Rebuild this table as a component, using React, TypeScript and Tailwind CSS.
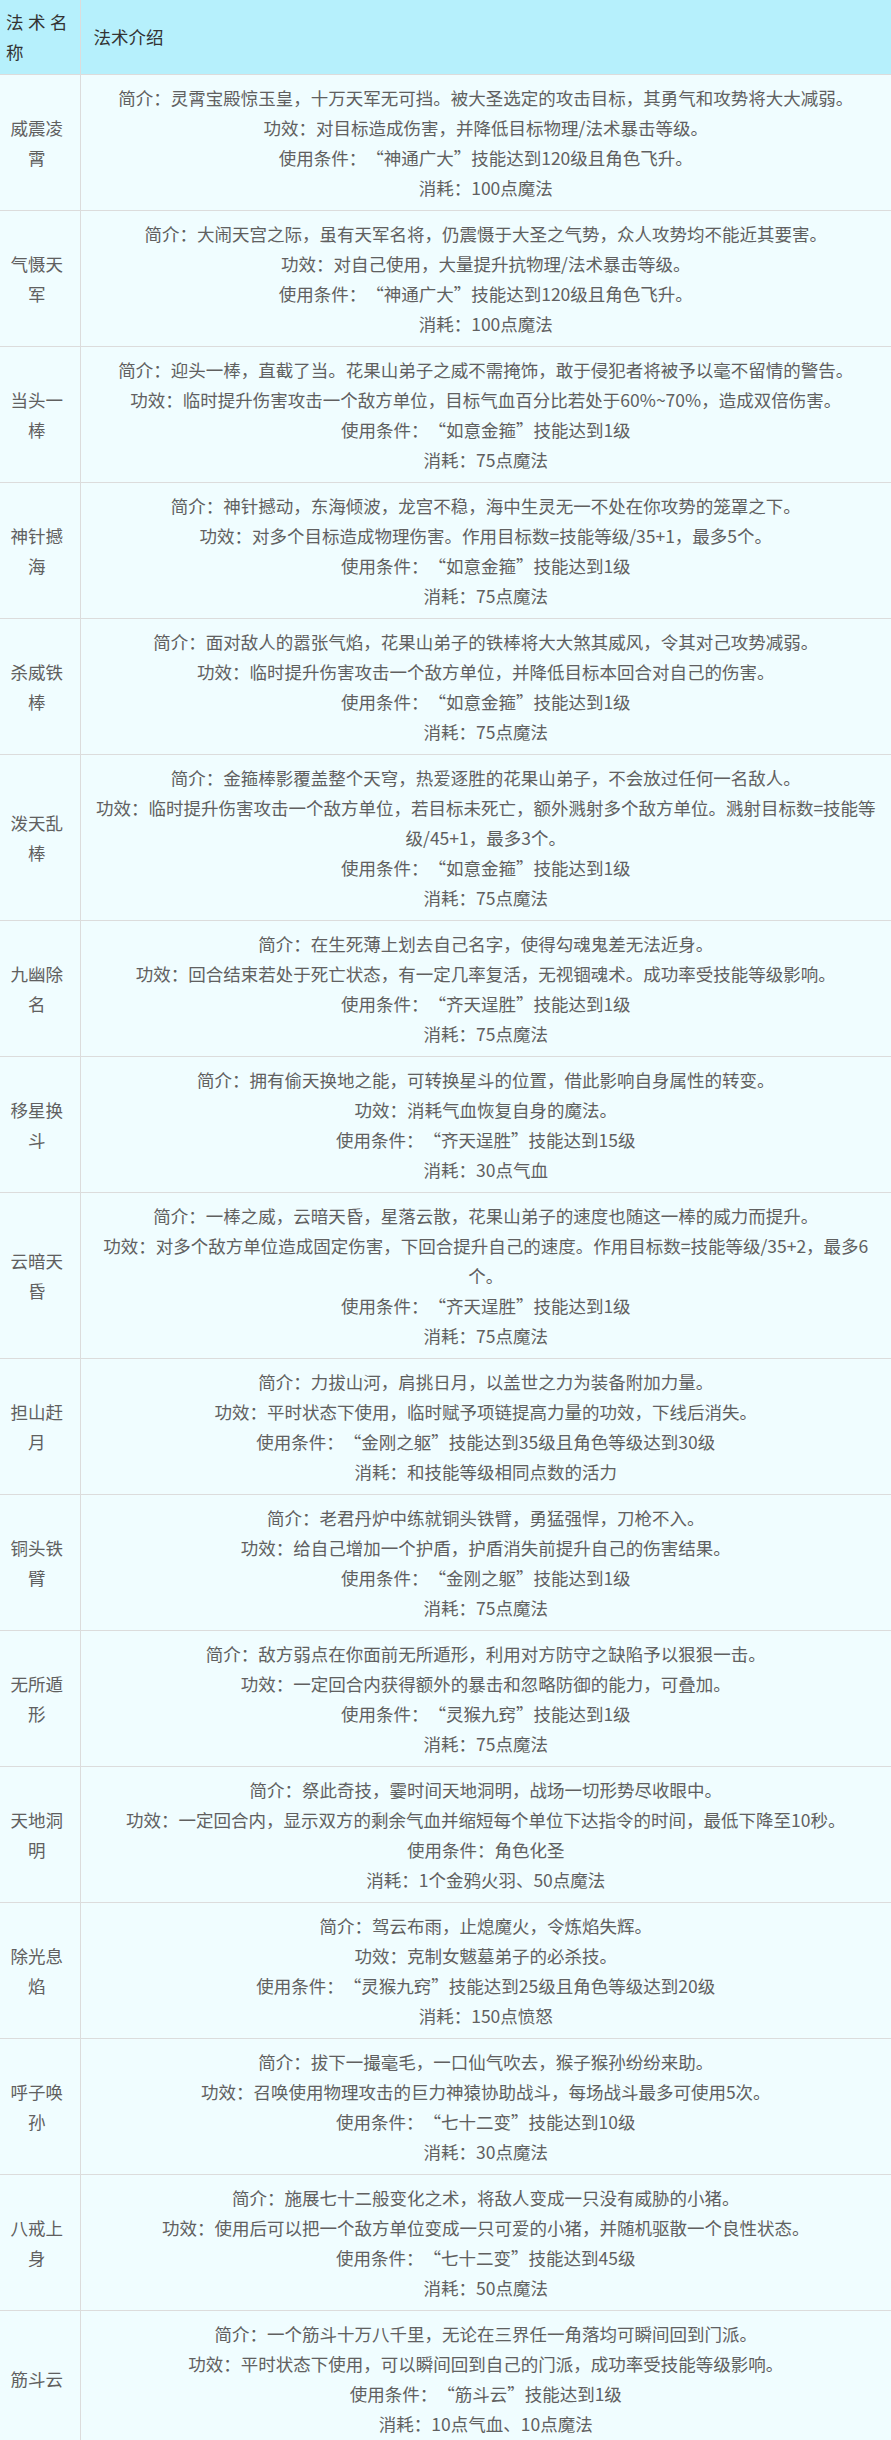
type Skill = {
  name: string;
  lines: string[];
};

const skills: Skill[] = [
  {
    name: "威震凌霄",
    lines: [
      "简介：灵霄宝殿惊玉皇，十万天军无可挡。被大圣选定的攻击目标，其勇气和攻势将大大减弱。",
      "功效：对目标造成伤害，并降低目标物理/法术暴击等级。",
      "使用条件：“神通广大”技能达到120级且角色飞升。",
      "消耗：100点魔法",
    ],
  },
  {
    name: "气慑天军",
    lines: [
      "简介：大闹天宫之际，虽有天军名将，仍震慑于大圣之气势，众人攻势均不能近其要害。",
      "功效：对自己使用，大量提升抗物理/法术暴击等级。",
      "使用条件：“神通广大”技能达到120级且角色飞升。",
      "消耗：100点魔法",
    ],
  },
  {
    name: "当头一棒",
    lines: [
      "简介：迎头一棒，直截了当。花果山弟子之威不需掩饰，敢于侵犯者将被予以毫不留情的警告。",
      "功效：临时提升伤害攻击一个敌方单位，目标气血百分比若处于60%~70%，造成双倍伤害。",
      "使用条件：“如意金箍”技能达到1级",
      "消耗：75点魔法",
    ],
  },
  {
    name: "神针撼海",
    lines: [
      "简介：神针撼动，东海倾波，龙宫不稳，海中生灵无一不处在你攻势的笼罩之下。",
      "功效：对多个目标造成物理伤害。作用目标数=技能等级/35+1，最多5个。",
      "使用条件：“如意金箍”技能达到1级",
      "消耗：75点魔法",
    ],
  },
  {
    name: "杀威铁棒",
    lines: [
      "简介：面对敌人的嚣张气焰，花果山弟子的铁棒将大大煞其威风，令其对己攻势减弱。",
      "功效：临时提升伤害攻击一个敌方单位，并降低目标本回合对自己的伤害。",
      "使用条件：“如意金箍”技能达到1级",
      "消耗：75点魔法",
    ],
  },
  {
    name: "泼天乱棒",
    lines: [
      "简介：金箍棒影覆盖整个天穹，热爱逐胜的花果山弟子，不会放过任何一名敌人。",
      "功效：临时提升伤害攻击一个敌方单位，若目标未死亡，额外溅射多个敌方单位。溅射目标数=技能等级/45+1，最多3个。",
      "使用条件：“如意金箍”技能达到1级",
      "消耗：75点魔法",
    ],
  },
  {
    name: "九幽除名",
    lines: [
      "简介：在生死薄上划去自己名字，使得勾魂鬼差无法近身。",
      "功效：回合结束若处于死亡状态，有一定几率复活，无视锢魂术。成功率受技能等级影响。",
      "使用条件：“齐天逞胜”技能达到1级",
      "消耗：75点魔法",
    ],
  },
  {
    name: "移星换斗",
    lines: [
      "简介：拥有偷天换地之能，可转换星斗的位置，借此影响自身属性的转变。",
      "功效：消耗气血恢复自身的魔法。",
      "使用条件：“齐天逞胜”技能达到15级",
      "消耗：30点气血",
    ],
  },
  {
    name: "云暗天昏",
    lines: [
      "简介：一棒之威，云暗天昏，星落云散，花果山弟子的速度也随这一棒的威力而提升。",
      "功效：对多个敌方单位造成固定伤害，下回合提升自己的速度。作用目标数=技能等级/35+2，最多6个。",
      "使用条件：“齐天逞胜”技能达到1级",
      "消耗：75点魔法",
    ],
  },
  {
    name: "担山赶月",
    lines: [
      "简介：力拔山河，肩挑日月，以盖世之力为装备附加力量。",
      "功效：平时状态下使用，临时赋予项链提高力量的功效，下线后消失。",
      "使用条件：“金刚之躯”技能达到35级且角色等级达到30级",
      "消耗：和技能等级相同点数的活力",
    ],
  },
  {
    name: "铜头铁臂",
    lines: [
      "简介：老君丹炉中练就铜头铁臂，勇猛强悍，刀枪不入。",
      "功效：给自己增加一个护盾，护盾消失前提升自己的伤害结果。",
      "使用条件：“金刚之躯”技能达到1级",
      "消耗：75点魔法",
    ],
  },
  {
    name: "无所遁形",
    lines: [
      "简介：敌方弱点在你面前无所遁形，利用对方防守之缺陷予以狠狠一击。",
      "功效：一定回合内获得额外的暴击和忽略防御的能力，可叠加。",
      "使用条件：“灵猴九窍”技能达到1级",
      "消耗：75点魔法",
    ],
  },
  {
    name: "天地洞明",
    lines: [
      "简介：祭此奇技，霎时间天地洞明，战场一切形势尽收眼中。",
      "功效：一定回合内，显示双方的剩余气血并缩短每个单位下达指令的时间，最低下降至10秒。",
      "使用条件：角色化圣",
      "消耗：1个金鸦火羽、50点魔法",
    ],
  },
  {
    name: "除光息焰",
    lines: [
      "简介：驾云布雨，止熄魔火，令炼焰失辉。",
      "功效：克制女魃墓弟子的必杀技。",
      "使用条件：“灵猴九窍”技能达到25级且角色等级达到20级",
      "消耗：150点愤怒",
    ],
  },
  {
    name: "呼子唤孙",
    lines: [
      "简介：拔下一撮毫毛，一口仙气吹去，猴子猴孙纷纷来助。",
      "功效：召唤使用物理攻击的巨力神猿协助战斗，每场战斗最多可使用5次。",
      "使用条件：“七十二变”技能达到10级",
      "消耗：30点魔法",
    ],
  },
  {
    name: "八戒上身",
    lines: [
      "简介：施展七十二般变化之术，将敌人变成一只没有威胁的小猪。",
      "功效：使用后可以把一个敌方单位变成一只可爱的小猪，并随机驱散一个良性状态。",
      "使用条件：“七十二变”技能达到45级",
      "消耗：50点魔法",
    ],
  },
  {
    name: "筋斗云",
    lines: [
      "简介：一个筋斗十万八千里，无论在三界任一角落均可瞬间回到门派。",
      "功效：平时状态下使用，可以瞬间回到自己的门派，成功率受技能等级影响。",
      "使用条件：“筋斗云”技能达到1级",
      "消耗：10点气血、10点魔法",
    ],
  },
];

// curly quotes take a full em box, as on the source page
function Line({ text }: { text: string }) {
  const parts = text.split(/([“”])/);
  return (
    <div>
      {parts.map((part, i) => {
        if (part === "“") {
          return (
            <span key={i} className="inline-block w-[1em] text-right">
              {part}
            </span>
          );
        }
        if (part === "”") {
          return (
            <span key={i} className="inline-block w-[1em] text-left">
              {part}
            </span>
          );
        }
        return part;
      })}
    </div>
  );
}

export default function App() {
  return (
    <div
      lang="zh-CN"
      className="w-[891px] bg-white font-['Noto_Sans_CJK_SC','Noto_Sans',sans-serif] text-[17.5px] leading-[30px]"
    >
      <table className="w-full table-fixed border-collapse">
        <colgroup>
          <col className="w-[80px]" />
          <col />
        </colgroup>
        <thead>
          <tr className="bg-[#b6f0fc] text-[#333]">
            <th className="border-r border-b border-[#dcdcdc] py-[7px] pl-[6px] pr-[12px] text-justify align-middle font-normal">
              法术名称
            </th>
            <th className="border-b border-[#dcdcdc] py-[7px] pl-[13px] pr-[10px] text-left align-middle font-normal">
              法术介绍
            </th>
          </tr>
        </thead>
        <tbody>
          {skills.map((skill) => (
            <tr key={skill.name} className="bg-[#f0fdff] text-[#606060]">
              <td className="border-r border-b border-[#dcdcdc] py-[7.5px] pl-[6px] pr-[12px] text-center align-middle">
                {skill.name}
              </td>
              <td className="border-b border-[#dcdcdc] px-[10px] py-[7.5px] text-center align-middle">
                {skill.lines.map((line) => (
                  <Line key={line} text={line} />
                ))}
              </td>
            </tr>
          ))}
        </tbody>
      </table>
    </div>
  );
}
